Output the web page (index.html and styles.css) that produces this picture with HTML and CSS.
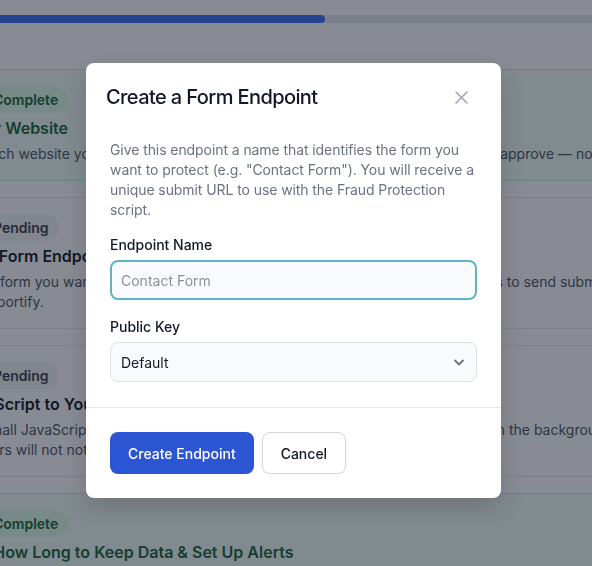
FILE: index.html
```html
<!DOCTYPE html>
<html lang="en">
<head>
<meta charset="utf-8">
<title>Create a Form Endpoint</title>
<link rel="stylesheet" href="styles.css">
</head>
<body>
<div class="page">
  <div class="progress"><div class="progress-fill" style="width: 416px"></div></div>

  <div class="steps">
    <section class="step step--done">
      <div class="step-head"><span class="step-num">1</span><span class="badge badge--done">Complete</span></div>
      <h3 class="step-title">Add Your Website</h3>
      <p class="step-desc">Select which website you want to protect. We accept form data from the domains you approve — not from copies or bots.</p>
    </section>

    <section class="step">
      <div class="step-head"><span class="step-num">2</span><span class="badge">Pending</span></div>
      <h3 class="step-title">Create a Form Endpoint</h3>
      <p class="step-desc">Give each form you want to protect its own endpoint: a unique URL that the script uses to send submissions<br>over to Reportify.</p>
    </section>

    <section class="step">
      <div class="step-head"><span class="step-num">3</span><span class="badge">Pending</span></div>
      <h3 class="step-title">Add the Script to Your Website</h3>
      <p class="step-desc">Paste a small JavaScript snippet to every page with a protected form. It loads quietly in the background.<br>Your visitors will not notice any difference.</p>
    </section>

    <section class="step step--done">
      <div class="step-head"><span class="step-num">4</span><span class="badge badge--done">Complete</span></div>
      <h3 class="step-title">Choose How Long to Keep Data &amp; Set Up Alerts</h3>
      <p class="step-desc">Decide how many days submissions are stored and who gets notified.</p>
    </section>
  </div>
</div>

<div class="overlay"></div>

<div class="modal" role="dialog" aria-labelledby="modal-title">
  <div class="modal-header">
    <h2 class="modal-title" id="modal-title">Create a Form Endpoint</h2>
    <button class="modal-close" type="button" aria-label="Close">
      <svg width="13" height="13" viewBox="0 0 13 13" fill="none" stroke="currentColor" stroke-width="1.5" stroke-linecap="round"><path d="M1 1l11 11M12 1L1 12"/></svg>
    </button>
  </div>
  <div class="modal-body">
    <p class="modal-desc">Give this endpoint a name that identifies the form you want to protect (e.g. "Contact Form"). You will receive a unique submit URL to use with the Fraud Protection script.</p>
    <div class="field">
      <label class="field-label" for="endpoint-name">Endpoint Name</label>
      <input class="input input--focus" id="endpoint-name" type="text" placeholder="Contact Form" autofocus>
    </div>
    <div class="field">
      <label class="field-label" for="public-key">Public Key</label>
      <div class="select-wrap">
        <select class="select" id="public-key">
          <option>Default</option>
        </select>
        <svg class="select-chevron" width="12" height="12" viewBox="0 0 12 12" fill="none" stroke="currentColor" stroke-width="1.8" stroke-linecap="round" stroke-linejoin="round"><path d="M2 4.5l4 4 4-4"/></svg>
      </div>
    </div>
  </div>
  <div class="modal-footer">
    <button class="btn btn--primary" type="button">Create Endpoint</button>
    <button class="btn btn--secondary" type="button">Cancel</button>
  </div>
</div>
</body>
</html>
```

FILE: styles.css
```css
* { box-sizing: border-box; }

html, body {
  margin: 0;
  padding: 0;
  overflow: hidden;
  background: #ffffff;
  font-family: Inter, "Noto Sans", sans-serif;
  color: #111827;
}

.page {
  width: 900px;
  margin-left: -91px;
  padding-top: 15px;
}

.progress {
  height: 8px;
  border-radius: 999px;
  background: #e5e7eb;
  overflow: hidden;
}

.progress-fill {
  height: 100%;
  border-radius: 999px;
  background: #3a6df0;
}

.steps {
  margin-top: 46px;
  display: flex;
  flex-direction: column;
  gap: 16px;
}

.step {
  border: 1px solid #e5e7eb;
  border-radius: 10px;
  background: #ffffff;
  padding: 16px 20px;
}

.step--done {
  background: #f0fdf4;
  border-color: #bbf7d0;
}

.step-head {
  display: flex;
  align-items: center;
  gap: 12px;
}

.step-num {
  width: 41px;
  height: 27px;
  border-radius: 999px;
  background: #e5e7eb;
  font-size: 13px;
  font-weight: 600;
  display: flex;
  align-items: center;
  justify-content: center;
  color: #374151;
}

.badge {
  display: inline-block;
  padding: 4px 10px;
  border-radius: 999px;
  font-size: 14px;
  line-height: 19px;
  font-weight: 600;
  background: #f3f4f6;
  color: #374151;
}

.badge--done {
  background: #dcfce7;
  color: #166534;
}

.step-title {
  margin: 3px 0 0;
  font-size: 16px;
  line-height: 24px;
  font-weight: 600;
  color: #111827;
}

.step--done .step-title { color: #166534; }

.step-desc {
  margin: 4px 0 0;
  font-size: 14px;
  line-height: 20px;
  color: #4b5563;
  white-space: nowrap;
}

.overlay {
  position: fixed;
  inset: 0;
  background: rgba(17, 24, 39, 0.5);
}

.modal {
  position: fixed;
  left: 86px;
  top: 63px;
  width: 415px;
  background: #ffffff;
  border-radius: 8px;
  box-shadow: 0 10px 25px rgba(0, 0, 0, 0.15);
}

.modal-header {
  display: flex;
  align-items: center;
  justify-content: space-between;
  padding: 20px 28px 0 20px;
}

.modal-title {
  margin: 0;
  font-size: 20px;
  line-height: 28px;
  font-weight: 500;
  letter-spacing: -0.6px;
  color: #111827;
}

.modal-close {
  width: 24px;
  height: 24px;
  padding: 0;
  border: 0;
  background: transparent;
  color: #9ca3af;
  display: flex;
  align-items: center;
  justify-content: center;
}

.modal-body {
  padding: 29px 24px 25px;
}

.modal-desc {
  margin: 0 0 15px;
  font-size: 14px;
  line-height: 20px;
  letter-spacing: -0.08px;
  color: #6b7280;
}

.field + .field { margin-top: 17px; }

.field-label {
  display: block;
  margin-bottom: 5px;
  font-size: 14px;
  line-height: 20px;
  font-weight: 500;
  color: #111827;
}

.input,
.select {
  display: block;
  width: 100%;
  height: 40px;
  border-radius: 8px;
  background: #f9fafb;
  font-family: inherit;
  font-size: 14px;
  color: #111827;
  outline: none;
}

.input {
  border: 2px solid #5eb3c8;
  padding: 0 9px;
}

.input::placeholder { color: #8b9099; }

.select {
  -webkit-appearance: none;
  appearance: none;
  border: 1px solid #dcdfe3;
  padding: 0 10px;
}

.select-wrap { position: relative; }

.select-chevron {
  position: absolute;
  right: 12px;
  top: 14px;
  color: #6b7280;
  pointer-events: none;
}

.modal-footer {
  display: flex;
  gap: 8px;
  padding: 24px;
  border-top: 1px solid #e5e7eb;
}

.btn {
  height: 42px;
  padding: 0 18px;
  border-radius: 8px;
  font-family: inherit;
  font-size: 14px;
  font-weight: 500;
}

.btn--primary {
  border: 0;
  background: #2b55d3;
  color: #ffffff;
}

.btn--secondary {
  border: 1px solid #d1d5db;
  background: #ffffff;
  color: #111827;
}
```
